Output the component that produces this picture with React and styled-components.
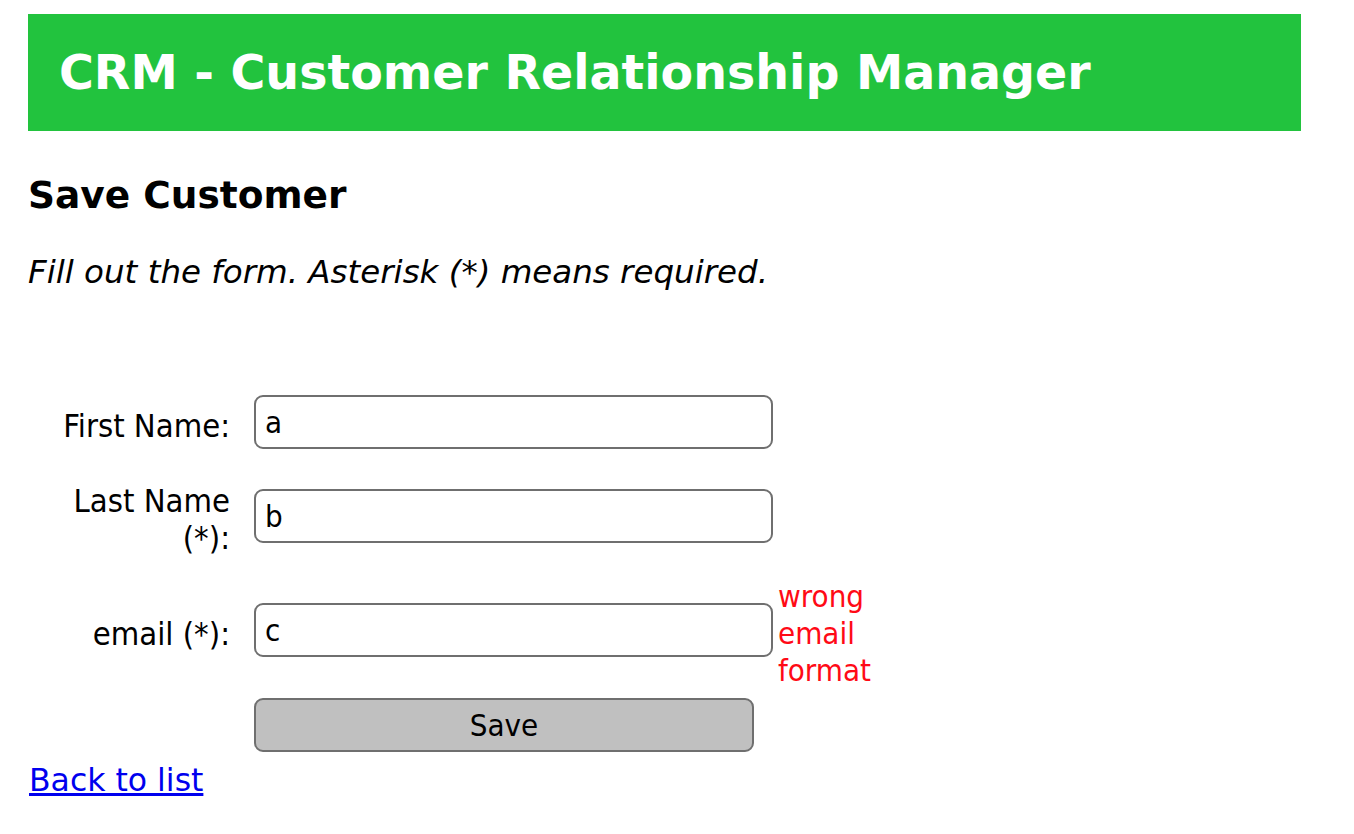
import React from "react"
import styled, { createGlobalStyle } from "styled-components"

const GlobalStyle = createGlobalStyle`
  body {
    margin: 0;
    padding: 14px 0 0 28px;
    background: #ffffff;
    font-family: "DejaVu Sans Condensed", "DejaVu Sans", sans-serif;
    color: #000000;
  }
`

const Header = styled.header`
  width: 1273px;
  height: 117px;
  box-sizing: border-box;
  background: #22c33e;
  display: flex;
  align-items: center;
  padding-left: 31px;
`

const Title = styled.h1`
  margin: 0;
  color: #ffffff;
  font-family: "DejaVu Sans", sans-serif;
  font-size: 47.5px;
  font-weight: bold;
`

const PageTitle = styled.h2`
  margin: 42px 0 0 0;
  font-family: "DejaVu Sans", sans-serif;
  font-size: 37.5px;
  font-weight: bold;
  line-height: 44px;
`

const Hint = styled.p`
  margin: 37px 0 0 0;
  font-family: "DejaVu Sans", sans-serif;
  font-size: 32.5px;
  font-style: italic;
  line-height: 37px;
`

const Form = styled.form`
  margin-top: 97px;
  display: flex;
  flex-direction: column;
`

const FieldRow = styled.div`
  display: grid;
  grid-template-columns: 202px 523px auto;
  align-items: center;
  column-gap: 24px;
  margin-bottom: ${props => props.gap}px;
`

const Label = styled.label`
  padding-top: 4px;
  margin-bottom: -4px;
  font-size: 32.5px;
  line-height: 37px;
  text-align: right;
`

const Input = styled.input`
  box-sizing: border-box;
  width: 519px;
  height: 54px;
  margin: 7px 0;
  padding: 0 9px;
  border: 2px solid #6f6f6f;
  border-radius: 9px;
  font-family: inherit;
  font-size: 31px;
  color: #000000;
  background: #ffffff;
  outline: none;
`

const ErrorText = styled.span`
  color: #ff0a16;
  font-size: 31px;
  line-height: 37px;
  width: 100px;
  margin: 7px 0 0 -23px;
`

const SaveButton = styled.button`
  grid-column: 2;
  box-sizing: border-box;
  width: 500px;
  height: 54px;
  border: 2px solid #6f6f6f;
  border-radius: 9px;
  background: #c0c0c0;
  font-family: inherit;
  font-size: 31px;
  color: #000000;
`

const BackLink = styled.a`
  display: inline-block;
  margin: 9px 0 0 1px;
  font-family: "DejaVu Sans", sans-serif;
  font-size: 31.5px;
  line-height: 38px;
  color: #0000ee;
  text-decoration: underline;
`

const App = () => {
  return (
    <>
      <GlobalStyle />
      <Header>
        <Title>CRM - Customer Relationship Manager</Title>
      </Header>
      <PageTitle>Save Customer</PageTitle>
      <Hint>Fill out the form. Asterisk (*) means required.</Hint>
      <Form onSubmit={e => e.preventDefault()}>
        <FieldRow gap={23}>
          <Label htmlFor="firstName">First Name:</Label>
          <Input id="firstName" defaultValue="a" />
        </FieldRow>
        <FieldRow gap={18}>
          <Label htmlFor="lastName">Last Name (*):</Label>
          <Input id="lastName" defaultValue="b" />
        </FieldRow>
        <FieldRow gap={9}>
          <Label htmlFor="email">email (*):</Label>
          <Input id="email" defaultValue="c" />
          <ErrorText>wrong email format</ErrorText>
        </FieldRow>
        <FieldRow gap={0}>
          <SaveButton type="submit">Save</SaveButton>
        </FieldRow>
      </Form>
      <BackLink href="#">Back to list</BackLink>
    </>
  )
}

export default App
